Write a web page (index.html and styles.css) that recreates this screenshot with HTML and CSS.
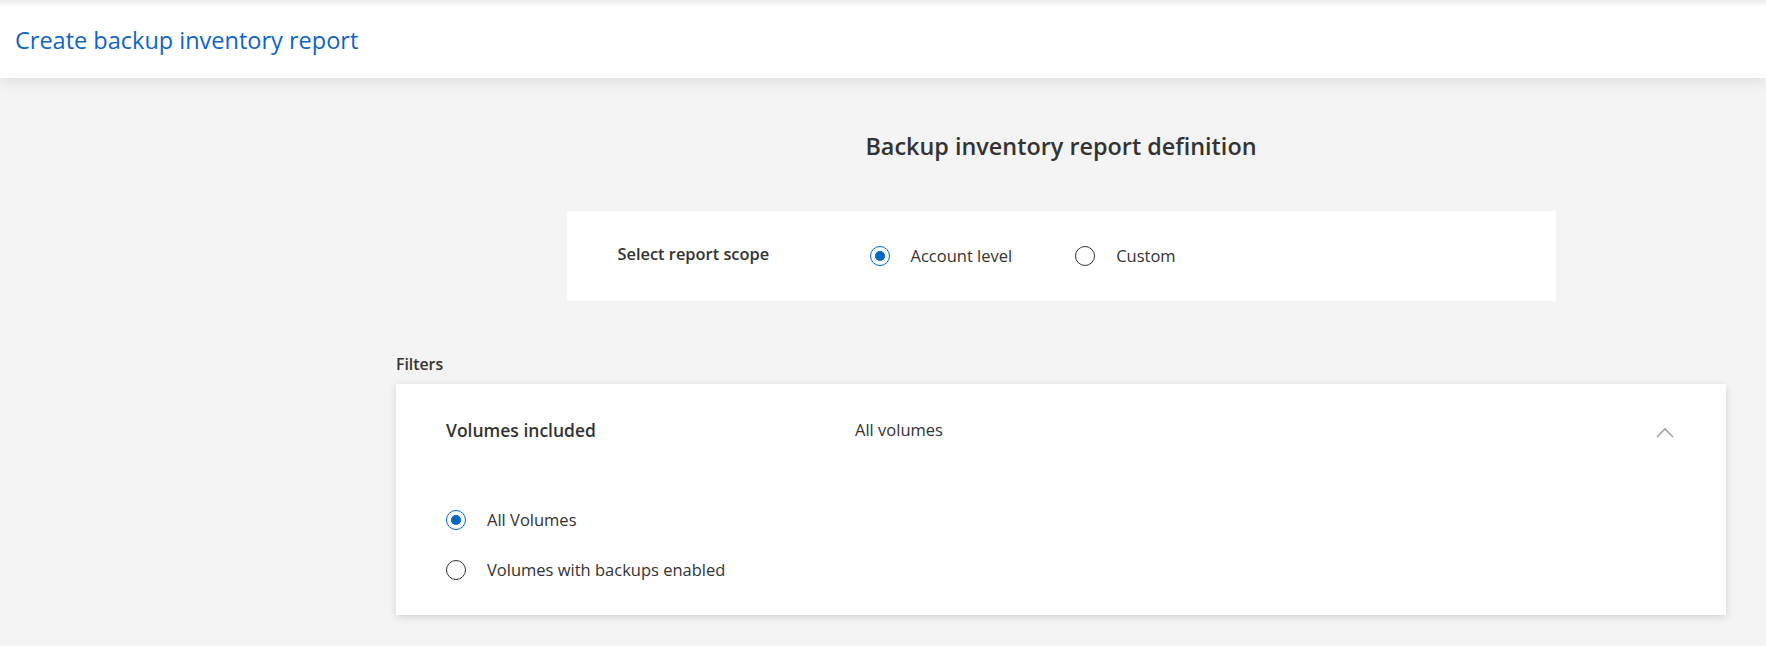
FILE: index.html
```html
<!DOCTYPE html>
<html lang="en">
<head>
<meta charset="utf-8">
<title>Create backup inventory report</title>
<link rel="stylesheet" href="styles.css">
</head>
<body>
<header class="topbar">
  <h1 class="page-title">Create backup inventory report</h1>
</header>
<main class="content">
  <h2 class="section-title">Backup inventory report definition</h2>
  <section class="scope-card">
    <div class="scope-label">Select report scope</div>
    <div class="radio-row">
      <label class="radio is-checked"><span class="radio-circle"></span><span class="radio-text">Account level</span></label>
      <label class="radio"><span class="radio-circle"></span><span class="radio-text">Custom</span></label>
    </div>
  </section>
  <div class="filters-label">Filters</div>
  <section class="filter-card">
    <div class="filter-head">
      <div class="filter-name">Volumes included</div>
      <div class="filter-value">All volumes</div>
      <svg class="chevron" width="18" height="11" viewBox="0 0 18 11"><polyline points="1,10 9,2 17,10" fill="none" stroke="#a2a2a2" stroke-width="1.6"/></svg>
    </div>
    <div class="radio-col">
      <label class="radio is-checked"><span class="radio-circle"></span><span class="radio-text">All Volumes</span></label>
      <label class="radio"><span class="radio-circle"></span><span class="radio-text">Volumes with backups enabled</span></label>
    </div>
  </section>
</main>
</body>
</html>
```
FILE: styles.css
```css
* { box-sizing: border-box; }
html, body { margin: 0; padding: 0; }
body {
  background: #f4f4f4;
  font-family: "Open Sans", "Noto Sans", sans-serif;
  color: #333;
  width: 1766px;
  height: 646px;
  overflow: hidden;
}
.topbar {
  height: 78px;
  background: linear-gradient(#ececec, #ffffff 7px);
  box-shadow: 0 3px 14px rgba(0,0,0,0.10);
  display: flex;
  align-items: center;
  padding-left: 15px;
  position: relative;
  z-index: 1;
}
.page-title {
  margin: 0;
  font-size: 23.5px;
  font-weight: 400;
  color: #1064c8;
  line-height: 30px;
  padding-top: 2px;
}
.content {
  padding: 53px 40px 0 396px;
}
.section-title {
  margin: 0 0 50px;
  text-align: center;
  font-size: 23.4px;
  font-weight: 600;
  line-height: 30px;
  color: #333;
}
.scope-card {
  width: 989px;
  height: 90px;
  margin: 0 auto;
  background: #fff;
  display: flex;
  align-items: center;
  padding-left: 51px;
}
.scope-label {
  width: 252px;
  font-size: 16.4px;
  font-weight: 600;
  line-height: 22px;
  margin-top: -4px;
}
.radio-row {
  display: flex;
  gap: 63px;
}
.radio {
  display: flex;
  align-items: center;
  gap: 21px;
  font-size: 16.5px;
  line-height: 20px;
  color: #333;
}
.radio-circle {
  width: 20px;
  height: 20px;
  border-radius: 50%;
  border: 1.5px solid #333;
  background: #fff;
  flex: none;
  display: flex;
  align-items: center;
  justify-content: center;
}
.radio.is-checked .radio-circle {
  border-color: #0067c5;
}
.radio.is-checked .radio-circle::after {
  content: "";
  width: 10px;
  height: 10px;
  border-radius: 50%;
  background: #0067c5;
}
.filters-label {
  margin-top: 52px;
  margin-bottom: 9px;
  font-size: 15.8px;
  font-weight: 600;
  line-height: 22px;
}
.filter-card {
  background: #fff;
  height: 231px;
  padding: 35px 52px 0 50px;
  box-shadow: 0 2px 8px rgba(0,0,0,0.13);
}
.filter-head {
  display: flex;
  align-items: center;
  line-height: 22px;
}
.filter-name {
  width: 409px;
  font-size: 17.5px;
  font-weight: 600;
}
.filter-value {
  flex: 1;
  font-size: 16.5px;
}
.chevron {
  margin-top: 5px;
}
.radio-col {
  margin-top: 69px;
  display: flex;
  flex-direction: column;
  gap: 30px;
}
```
